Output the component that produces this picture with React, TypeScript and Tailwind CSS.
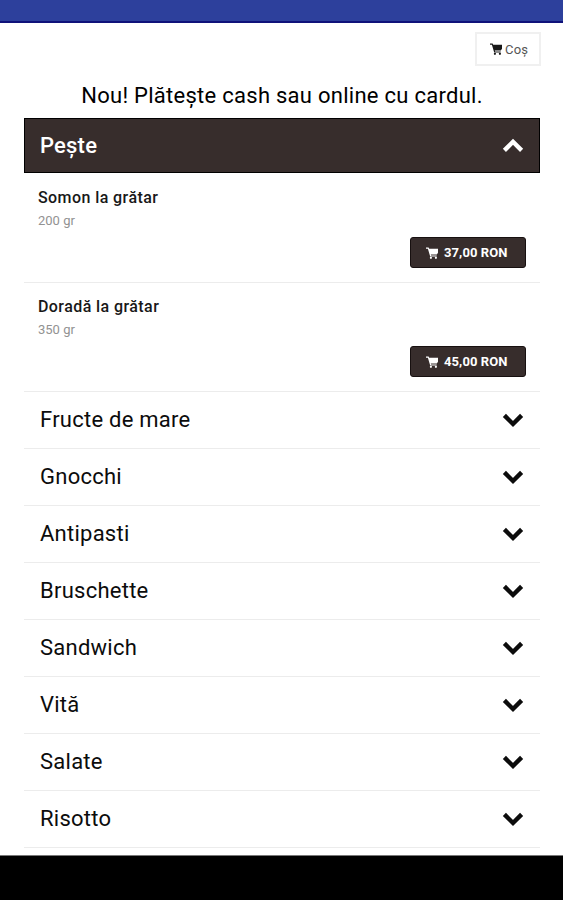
interface Dish {
  name: string
  weight: string
  price: string
}

const dishes: Dish[] = [
  { name: 'Somon la grătar', weight: '200 gr', price: '37,00 RON' },
  { name: 'Doradă la grătar', weight: '350 gr', price: '45,00 RON' },
]

const categories = ['Fructe de mare', 'Gnocchi', 'Antipasti', 'Bruschette', 'Sandwich', 'Vită', 'Salate', 'Risotto']

function CartIcon({ className }: { className?: string }) {
  return (
    <svg viewBox="0 0 12 12" className={className} fill="currentColor" aria-hidden="true">
      <path d="M0 .5h2.6l.6 1.3H12v4L10.8 7.6H4.8l.3.8h5.6v1.2H4.2L1.9 1.7H0z" />
      <circle cx="4.9" cy="10.8" r="1.1" />
      <circle cx="9.9" cy="10.8" r="1.1" />
    </svg>
  )
}

function Chevron({ up = false }: { up?: boolean }) {
  return (
    <svg
      viewBox="0 0 22 16"
      className="h-4 w-[22px] shrink-0"
      fill="none"
      stroke="currentColor"
      strokeWidth="4.4"
      aria-hidden="true"
    >
      <path d={up ? 'M2.4 12.4L11 3.8l8.6 8.6' : 'M2.4 3.4L11 12l8.6-8.6'} />
    </svg>
  )
}

function DishRow({ dish }: { dish: Dish }) {
  return (
    <div className="flex h-[109px] shrink-0 flex-col border-b border-[#ececec] px-3.5 pt-3.5">
      <h3 className="text-[16px] leading-5 font-medium tracking-[0.42px] text-[#181818]">{dish.name}</h3>
      <p className="mt-1 text-[13px] leading-[18px] text-[#929292]">{dish.weight}</p>
      <button className="mt-[7px] flex h-[31px] w-[116px] items-center self-end rounded-[3px] border border-[#171010] bg-[#372d2c] pl-[15px] text-white">
        <CartIcon className="mr-1.5 h-3 w-3" />
        <span className="text-[13px] leading-none font-bold tracking-[0.1px] whitespace-nowrap">{dish.price}</span>
      </button>
    </div>
  )
}

export default function App() {
  return (
    <div className="flex h-[900px] w-full flex-col overflow-hidden bg-white font-['Roboto',sans-serif]">
      <div className="h-[23px] shrink-0 border-b-2 border-[#10127a] bg-[#2d409c]" />

      <main className="flex min-h-0 flex-1 flex-col pl-6 pr-[23px] pt-[9px]">
        <button className="-mr-px flex h-[34px] w-[66px] shrink-0 items-center self-end border-2 border-[#f0f0f0] pl-[13px] text-[#555]">
          <CartIcon className="mr-[3px] h-3 w-3 text-[#181818]" />
          <span className="text-[13px] leading-none tracking-[0.2px]">Coș</span>
        </button>

        <h1 className="mt-[15px] h-[37px] shrink-0 text-center text-[22px] leading-[30px] tracking-[0.27px] whitespace-nowrap text-black">
          Nou! Plătește cash sau online cu cardul.
        </h1>

        <div className="flex h-[55px] shrink-0 items-center justify-between border border-black bg-[#372d2c] px-[15px] text-white">
          <h2 className="text-[22px] leading-7 font-medium tracking-[0.2px]">Pește</h2>
          <Chevron up />
        </div>

        <div className="flex shrink-0 flex-col pt-px">
          {dishes.map((dish) => (
            <DishRow key={dish.name} dish={dish} />
          ))}
        </div>

        {categories.map((name) => (
          <div
            key={name}
            className="flex h-[57px] shrink-0 items-center justify-between border-b border-[#ececec] px-4 text-[#0c0c0c]"
          >
            <h2 className="text-[22px] leading-7 tracking-[0.25px]">{name}</h2>
            <Chevron />
          </div>
        ))}
      </main>

      <footer className="h-[45px] shrink-0 border-t border-[#777] bg-black" />
    </div>
  )
}
